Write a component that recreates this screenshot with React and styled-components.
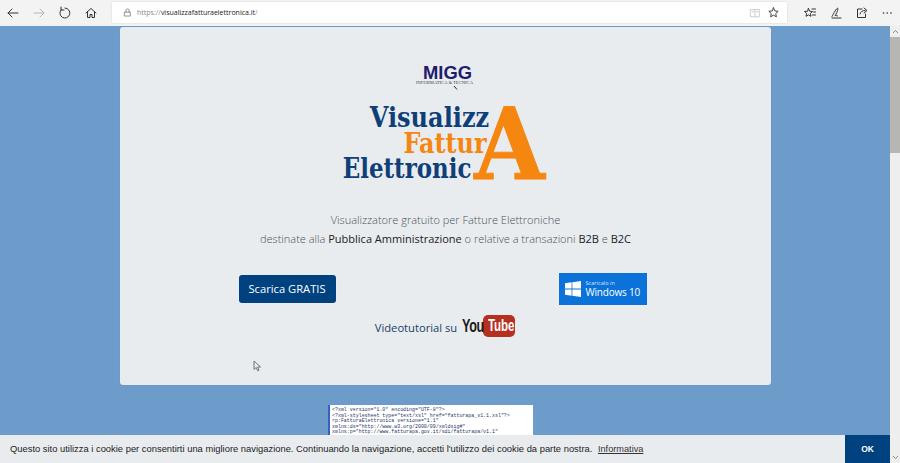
import React from 'react';
import styled, { createGlobalStyle } from 'styled-components';

const Global = createGlobalStyle`
  html, body { margin: 0; padding: 0; height: 463px; overflow: hidden; }
  body { font-family: "Open Sans", "Liberation Sans", sans-serif; }
  #root { height: 463px; }
`;
const Window = styled.div`
  position: relative; width: 900px; height: 463px; overflow: hidden;
  display: flex; flex-direction: column; background: #6d9cca;
`;
const Toolbar = styled.header`
  height: 26px; flex: none; box-sizing: border-box; background: #f3f3f3;
  display: flex; align-items: center; padding: 0 0 1px 0;
`;
const NavGroup = styled.div`
  width: 112px; flex: none; display: flex; align-items: center; box-sizing: border-box;
`;
const ToolBtn = styled.span`
  width: 26px; height: 22px; display: flex; align-items: center; justify-content: center; flex: none;
`;
const AddressBar = styled.div`
  width: 675px; height: 21px; flex: none; background: #fff; box-sizing: border-box;
  display: flex; align-items: center; padding: 0 7px 0 10px;
  box-shadow: 0 0 2px rgba(0,0,0,.12);
`;
const Url = styled.span`
  margin-left: 4px; flex: 1; font: 7px "Open Sans", sans-serif; color: #222;
  span { color: #8a8a8a; }
`;
const AddressIcons = styled.div`display: flex; align-items: center; gap: 6px;`;
const RightGroup = styled.div`
  flex: 1; display: flex; align-items: center; padding-left: 10px;
`;
const Viewport = styled.div`flex: 1; display: flex; min-height: 0;`;
const Page = styled.main`
  flex: 1; display: flex; flex-direction: column; align-items: center; min-width: 0; overflow: hidden; padding-top: 1px;
`;
const Card = styled.section`
  width: 651px; height: 358px; flex: none; box-sizing: border-box; background: #e9ecef; border-radius: 3px;
  margin-left: 1px; display: flex; flex-direction: column; align-items: center; padding-top: 36px;
  box-shadow: 0 0 1px rgba(90,120,160,.3);
`;
const Migg = styled.div`
  width: 58px; height: 30px; flex: none; margin-left: -1px;
`;
const Logo = styled.div`
  width: 208px; height: 79px; margin-top: 10px; display: flex; margin-left: -2px; flex: none;
`;
const LogoLines = styled.div`
  width: 135px; flex: none; display: flex; flex-direction: column; align-items: flex-end; padding-top: 2px; box-sizing: border-box;
`;
const LogoLine = styled.div`
  font: bold 28px/25.5px "DejaVu Serif Condensed", "Liberation Serif", serif; color: ${p => p.$c}; white-space: nowrap;
  margin-right: ${p => p.$mr}px; height: 25.5px; transform: scaleX(${p => p.$sx}); transform-origin: right center;
`;
const BigA = styled.div`
  width: 73px; flex: none; text-align: center; font: bold 100px/79px "DejaVu Serif Condensed", "Liberation Serif", serif; color: #f5860f; height: 79px;
  margin: 2px 0 0 -3px; transform: scaleX(1.01); -webkit-text-stroke: .8px #f5860f;
`;
const Tagline = styled.p`
  margin: 29px 0 0; text-align: center; font: 300 11px/18.5px "Open Sans", sans-serif; color: #4b5158;
  b { font-weight: 400; color: #1b2026; }
`;
const Actions = styled.div`
  width: 408px; display: flex; justify-content: space-between; align-items: center; margin-top: 25px; height: 32px; margin-left: -6px;
`;
const Download = styled.a`
  width: 97px; height: 28px; box-sizing: border-box; border-radius: 3px; background: #004280; color: #fff;
  font: 400 11.2px/28px "Open Sans", sans-serif; text-align: center; box-shadow: 0 0 1px #fff;
`;
const Store = styled.a`
  width: 88px; height: 32px; background: #0a72d8; color: #fff; display: flex; align-items: center;
  padding-left: 6px; box-sizing: border-box; gap: 5px;
`;
const StoreText = styled.div`
  display: flex; flex-direction: column; font: 400 5.6px/7px "Open Sans", sans-serif; color: #d8e8f8;
  strong { font: 400 10px/11px "Open Sans", sans-serif; color: #fff; letter-spacing: -.2px; white-space: nowrap; }
`;
const Tutorial = styled.div`
  display: flex; align-items: center; margin-top: 9px; margin-left: -1px; height: 24px;
`;
const TutorialLabel = styled.span`
  font: 400 11.2px/24px "Open Sans", sans-serif; color: #173f66; padding-top: 3px;
`;
const You = styled.span`
  font: bold 17.5px/22px "Liberation Sans", sans-serif; color: #1d1d1b; margin-left: 5px; transform: scaleX(.72); transform-origin: left; width: 21px; display: inline-block; letter-spacing: -.4px;
`;
const Tube = styled.span`
  width: 32px; height: 22px; border-radius: 5px; background: #b5301f; color: #fff; text-align: center;
  font: bold 16px/22px "Liberation Sans", sans-serif;
  span { display: inline-block; transform: scaleX(.72); transform-origin: center; letter-spacing: -.2px; }
`;
const Cursor = styled.svg`
  position: absolute; left: 253px; top: 360px;
`;
const XmlCard = styled.pre`
  width: 205px; height: 70px; flex: none; align-self: flex-start; box-sizing: border-box; margin: 20px 0 0 328px; background: #fff; border-left: 2px solid #3a5fc0;
  padding: 2px 0 0 2px; font: 4.95px/5.6px "Liberation Mono", monospace; color: #1f3566; overflow: hidden;
`;
const Scrollbar = styled.aside`
  width: 10px; flex: none; display: flex; flex-direction: column; background: #eeeeee;
`;
const ScrollBtn = styled.span`
  height: 11px; flex: none; display: flex; align-items: center; justify-content: center;
`;
const Thumb = styled.span`height: 116px; flex: none; background: #b8b6b3;`;
const Track = styled.span`flex: 1;`;
const Cookie = styled.div`
  position: absolute; left: 0; right: 10px; bottom: 0; height: 28px; background: #e9ecef; display: flex; align-items: center;
  padding-left: 10px; font: 9.4px/28px "Liberation Sans", sans-serif; color: #222;
`;
const CookieText = styled.span`flex: 1; white-space: nowrap; a { color: #333; text-decoration: underline; margin-left: 3px; font-size: 9.2px; }`;
const Ok = styled.button`
  width: 45px; height: 28px; border: 0; padding: 0; background: #004280; color: #fff; font: bold 8.5px "Liberation Sans", sans-serif;
`;

const S = { fill: 'none', stroke: '#333', strokeWidth: 1, strokeLinecap: 'round', strokeLinejoin: 'round' };
const Ico = ({ children, s = 14, ...p }) => <svg width={s} height={s} viewBox="0 0 14 14" {...S} {...p}>{children}</svg>;

export default function App() {
  return (
    <Window>
      <Global />
      <Toolbar>
        <NavGroup>
          <ToolBtn><Ico><path d="M12 7H2M6 3 2 7l4 4" /></Ico></ToolBtn>
          <ToolBtn><Ico stroke="#b5b5b5"><path d="M2 7h10M8 3l4 4-4 4" /></Ico></ToolBtn>
          <ToolBtn><Ico><path d="M3.4 3.4a5 5 0 1 0 3.6-1.4M3 1v3h3" /></Ico></ToolBtn>
          <ToolBtn><Ico><path d="M2 7 7 2.5 12 7M3.5 6v5.5h2.5V8.5h2v3h2.500V6" /></Ico></ToolBtn>
        </NavGroup>
        <AddressBar>
          <Ico s={11} stroke="#777"><path d="M3.500 6.500h7v5h-7zM5 6.500V4.500a2 2 0 0 1 4 0v2" /></Ico>
          <Url><span>https://</span>visualizzafatturaelettronica.it<span>/</span></Url>
          <AddressIcons>
            <Ico s={12} stroke="#c4c4c4"><path d="M2 3h10v8.500H2zM7 3v8.500M3.500 5.500h2M8.500 5.500h2" /></Ico>
            <Ico s={13}><path d="m7 2 1.500 3.300 3.500.4-2.600 2.400.7 3.500L7 9.900 3.900 11.600l.7-3.500L2 5.700l3.500-.4z" /></Ico>
          </AddressIcons>
        </AddressBar>
        <RightGroup>
          <ToolBtn><Ico><path d="m5.500 2.500 1.200 2.700 2.800.3-2.100 1.900.6 2.900-2.500-1.400-2.500 1.400.6-2.900L1.500 5.500l2.800-.3zM9 3h3.500M10.500 6h2M9.500 9h3" /></Ico></ToolBtn>
          <ToolBtn><Ico><path d="M3 10.500C5 7 7.500 2 8.600 2.200c1 .3-.5 4.500-2.300 7.300M6.500 9.500c1-.7 1.200.8 2 .5M3 12h9" /></Ico></ToolBtn>
          <ToolBtn><Ico><path d="M7 3H2.500v8.500h8V8M5 8c.5-2.500 2.500-3.500 5-3.500M9 2l3 2.500L9 7" /></Ico></ToolBtn>
          <ToolBtn><Ico strokeWidth={1.6} strokeDasharray="0.1 3.600"><path d="M2.500 7h9.500" /></Ico></ToolBtn>
        </RightGroup>
      </Toolbar>
      <Viewport>
        <Page>
          <Card>
            <Migg>
              <svg width="58" height="30" viewBox="0 0 58 30">
                <text x="7" y="16" fontFamily="Liberation Sans" fontWeight="bold" fontSize="18" fill="#211b6e" textLength="49" lengthAdjust="spacingAndGlyphs">MIGG</text>
                <text x="0" y="21" fontFamily="Liberation Serif" fontSize="3.500" fill="#444" textLength="57" lengthAdjust="spacingAndGlyphs">INFORMATICA &amp; TECNICA</text>
                <path d="m38 23 3 3.500" stroke="#222" strokeWidth="1" />
              </svg>
            </Migg>
            <Logo>
              <LogoLines>
                <LogoLine $c="#0f3f78" $mr={-14} $sx={.954}>Visualizz</LogoLine>
                <LogoLine $c="#f5860f" $mr={-11} $sx={.95}>Fattur</LogoLine>
                <LogoLine $c="#0f3f78" $mr={4} $sx={.91}>Elettronic</LogoLine>
              </LogoLines>
              <BigA>A</BigA>
            </Logo>
            <Tagline>
              Visualizzatore gratuito per Fatture Elettroniche<br />
              destinate alla <b>Pubblica Amministrazione</b> o relative a transazioni <b>B2B</b> e <b>B2C</b>
            </Tagline>
            <Actions>
              <Download>Scarica GRATIS</Download>
              <Store>
                <svg width="16" height="16" viewBox="0 0 17 17"><path fill="#fff" d="M0 2.400 7 1.400v6.700H0zM7.800 1.300 17 0v8.100H7.800zM0 8.900h7v6.700L0 14.600zM7.800 8.900H17V17l-9.200-1.300z" /></svg>
                <StoreText>Scaricalo in<strong>Windows 10</strong></StoreText>
              </Store>
            </Actions>
            <Tutorial>
              <TutorialLabel>Videotutorial su</TutorialLabel>
              <You>You</You>
              <Tube><span>Tube</span></Tube>
            </Tutorial>
          </Card>
          <XmlCard>{`<?xml version="1.0" encoding="UTF-8"?>
<?xml-stylesheet type="text/xsl" href="fatturapa_v1.1.xsl"?>
<p:FatturaElettronica versione="1.1"
xmlns:ds="http://www.w3.org/2000/09/xmldsig#"
xmlns:p="http://www.fatturapa.gov.it/sdi/fatturapa/v1.1"
xmlns:xsi="http://www.w3.org/2001/XMLSchema-instance">`}</XmlCard>
        </Page>
        <Scrollbar>
          <ScrollBtn><svg width="7" height="5" viewBox="0 0 7 5"><path d="m1 4 2.500-2.500L6 4" fill="none" stroke="#888" /></svg></ScrollBtn>
          <Thumb />
          <Track />
          <ScrollBtn><svg width="7" height="5" viewBox="0 0 7 5"><path d="m1 1 2.500 2.500L6 1" fill="none" stroke="#888" /></svg></ScrollBtn>
        </Scrollbar>
      </Viewport>
      <Cookie>
        <CookieText>Questo sito utilizza i cookie per consentirti una migliore navigazione. Continuando la navigazione, accetti l'utilizzo dei cookie da parte nostra. <a>Informativa</a></CookieText>
        <Ok>OK</Ok>
      </Cookie>
      <Cursor width="9" height="12" viewBox="0 0 9 12"><path d="M1 1v8.500l2.200-2 1.500 3.300 1.300-.6-1.500-3.200H7.500z" fill="#e9ecef" stroke="#555" strokeWidth=".8" /></Cursor>
    </Window>
  );
}
